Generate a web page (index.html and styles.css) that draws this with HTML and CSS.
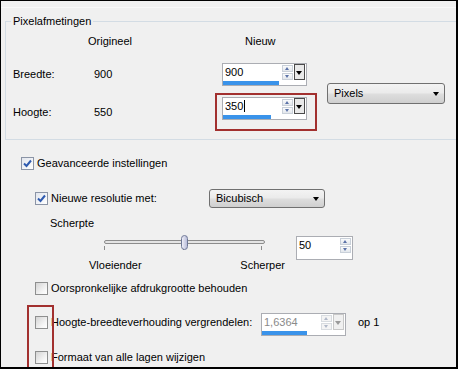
FILE: index.html
```html
<!DOCTYPE html>
<html lang="nl">
<head>
  <meta charset="UTF-8">
  <title>Afbeeldingsgrootte wijzigen</title>
  <link rel="stylesheet" href="styles.css">
</head>
<body>
  <div class="dialog">
    <fieldset class="group">
      <legend>Pixelafmetingen</legend>
      <div class="dims">
        <span class="head orig">Origineel</span>
        <span class="head new">Nieuw</span>

        <span class="lbl">Breedte:</span>
        <span class="val">900</span>
        <div class="cell">
          <div class="spin">
            <div class="top">
              <span class="entry">900</span>
              <span class="arrows"><i class="up"></i><i class="down"></i></span>
              <span class="drop"></span>
            </div>
            <div class="bar" style="width: 56px"></div>
          </div>
        </div>
        <div class="select unit">Pixels<span class="caret"></span></div>

        <span class="lbl">Hoogte:</span>
        <span class="val">550</span>
        <div class="cell mark">
          <div class="spin">
            <div class="top">
              <span class="entry">350<span class="cursor"></span></span>
              <span class="arrows"><i class="up"></i><i class="down"></i></span>
              <span class="drop"></span>
            </div>
            <div class="bar" style="width: 48px"></div>
          </div>
        </div>
      </div>
    </fieldset>

    <div class="options">
      <label class="check"><span class="box on"><svg width="11" height="11" viewBox="0 0 11 11"><path d="M2 5.5 L4.5 8 L9 2.5" fill="none" stroke="#2f5bb0" stroke-width="2"/></svg></span>Geavanceerde instellingen</label>

      <div class="sub">
        <div class="row resample">
          <label class="check fixed"><span class="box on"><svg width="11" height="11" viewBox="0 0 11 11"><path d="M2 5.5 L4.5 8 L9 2.5" fill="none" stroke="#2f5bb0" stroke-width="2"/></svg></span>Nieuwe resolutie met:</label>
          <div class="select method">Bicubisch<span class="caret"></span></div>
        </div>

        <div class="sharp-title">Scherpte</div>
        <div class="sharp">
          <div class="slider">
            <div class="track"><span class="thumb" style="left: 50%"></span></div>
            <div class="ticks"><i></i><i></i><i></i></div>
            <div class="ends"><span>Vloeiender</span><span>Scherper</span></div>
          </div>
          <div class="spin small">
            <div class="top">
              <span class="entry">50</span>
              <span class="arrows"><i class="up"></i><i class="down"></i></span>
            </div>
          </div>
        </div>

        <label class="check keep"><span class="box"></span>Oorspronkelijke afdrukgrootte behouden</label>

        <div class="row ratio">
          <label class="check lock"><span class="box"></span>Hoogte-breedteverhouding vergrendelen:</label>
          <div class="spin off">
            <div class="top">
              <span class="entry">1,6364</span>
              <span class="arrows"><i class="up"></i><i class="down"></i></span>
              <span class="drop"></span>
            </div>
            <div class="bar" style="width: 45px"></div>
          </div>
          <span class="per">op 1</span>
        </div>

        <label class="check last"><span class="box"></span>Formaat van alle lagen wijzigen</label>
      </div>
    </div>

    <div class="callout"></div>
  </div>
</body>
</html>
```

FILE: styles.css
```css
body {
  margin: 0;
  background-color: #F0F0F0;
  color: #000;
  font-family: "Liberation Sans", Arial, sans-serif;
  font-size: 11px;
  line-height: 13px;
}
.dialog {
  position: relative;
  box-sizing: border-box;
  width: 458px;
  height: 369px;
  padding-top: 6px;
  border: 1px solid #000;
  border-right-width: 2px;
  border-bottom-width: 2px;
  background-color: #F0F0F0;
  overflow: hidden;
}
.dialog::before {
  content: "";
  display: block;
  height: 1px;
  background-color: #F8F8F8;
}

/* pixel dimensions group */
.group {
  margin: 7px -20px 0 4px;
  padding: 6px 0 8px 7px;
  border: 1px solid #D3DCE4;
  border-right: none;
  min-width: 0;
}
.group legend {
  margin-left: -2px;
  padding: 0 2px;
}
.dims {
  display: grid;
  grid-template-columns: 75px 127px 102px auto;
  grid-template-rows: auto 38px 38px;
  align-items: center;
}
.head {
  height: 14px;
  line-height: 14px;
  margin-bottom: 7px;
}
.orig { grid-column: 2; }
.new { grid-column: 3; padding-left: 30px; }
.lbl { grid-column: 1; }
.val { padding-left: 6px; }
.cell {
  justify-self: start;
  padding-left: 7px;
}
.mark {
  align-self: stretch;
  box-sizing: border-box;
  padding: 2px 8px 9px 5px;
  border: 2px solid #A2302F;
}
.unit {
  grid-column: 4;
  grid-row: 2 / 4;
  margin-left: 10px;
  width: 118px;
}

/* spin box */
.spin {
  box-sizing: border-box;
  width: 85px;
  height: 23px;
  border: 1px solid #ABADB3;
  background-color: #fff;
}
.spin .top {
  display: flex;
  height: 17px;
}
.entry {
  flex: 1;
  padding: 2px 0 0 2px;
  line-height: 13px;
}
.cursor {
  display: inline-block;
  width: 1px;
  height: 12px;
  margin-left: 1px;
  vertical-align: -2px;
  background-color: #000;
}
.arrows {
  display: flex;
  flex-direction: column;
  gap: 1px;
  width: 11px;
  padding-top: 1px;
}
.arrows i {
  position: relative;
  box-sizing: border-box;
  height: 7px;
  border: 1px solid #C9D0D9;
  background: linear-gradient(#FAFBFC, #E3E7EC);
}
.arrows i::after {
  content: "";
  position: absolute;
  left: 2px;
  border-left: 2.5px solid transparent;
  border-right: 2.5px solid transparent;
}
.arrows .up::after {
  top: 1px;
  border-bottom: 3px solid #5C73A8;
}
.arrows .down::after {
  top: 1px;
  border-top: 3px solid #5C73A8;
}
.drop {
  position: relative;
  box-sizing: border-box;
  width: 11px;
  height: 16px;
  margin: 0 1px 0 1px;
  border: 1px solid #4A4A4A;
  background-color: #E9E9E9;
}
.drop::after {
  content: "";
  position: absolute;
  left: 1px;
  top: 6px;
  border-left: 3.5px solid transparent;
  border-right: 3.5px solid transparent;
  border-top: 4px solid #000;
}
.bar {
  height: 4px;
  background-color: #3A93EA;
}
.spin.off {
  margin-left: 4px;
  color: #8A8A8A;
}
.spin.off .arrows i {
  border-color: #D8DCE0;
  background: #F4F4F4;
}
.spin.off .up::after { border-bottom-color: #B0B8C8; }
.spin.off .down::after { border-top-color: #B0B8C8; }
.spin.off .drop {
  border-color: #C8C8C8;
  background-color: #F0F0F0;
}
.spin.off .drop::after { border-top-color: #9A9A9A; }
.spin.small {
  width: 57px;
  height: 24px;
  margin: 1px 0 0 11px;
}
.spin.small .arrows { margin-right: 1px; }

/* dropdowns */
.select {
  position: relative;
  box-sizing: border-box;
  height: 21px;
  padding-left: 6px;
  line-height: 19px;
  border: 1px solid #707070;
  border-radius: 3px;
  background: linear-gradient(#F3F3F3, #EBEBEB 45%, #DDDDDD 55%, #CFCFCF);
}
.caret {
  position: absolute;
  right: 5px;
  top: 8px;
  border-left: 3.5px solid transparent;
  border-right: 3.5px solid transparent;
  border-top: 4px solid #000;
}
.method {
  width: 116px;
  height: 19px;
  line-height: 17px;
}
.method .caret { top: 7px; }

/* lower options */
.options {
  padding: 17px 0 0 20px;
}
.check {
  display: flex;
  align-items: center;
  gap: 3px;
}
.box {
  box-sizing: border-box;
  width: 13px;
  height: 13px;
  border: 1px solid #8E8F8F;
  background: linear-gradient(135deg, #D4D4D4, #F6F6F6 70%, #FFFFFF);
}
.box.on {
  border-color: #8B94A6;
  background: linear-gradient(135deg, #E2E6EE, #FFFFFF);
}
.box svg { display: block; }
.sub {
  padding-left: 14px;
}
.row {
  display: flex;
}
.resample {
  align-items: center;
  margin-top: 19px;
}
.fixed { width: 174px; }
.sharp-title {
  margin: 9px 0 0 15px;
}
.sharp {
  display: flex;
  align-items: flex-start;
  margin: 5px 0 0 54px;
}
.slider {
  width: 196px;
}
.track {
  position: relative;
  box-sizing: border-box;
  width: 161px;
  height: 4px;
  margin: 5px 0 0 15px;
  border: 1px solid #8C8C8C;
  border-radius: 2px;
  background-color: #E4E4E4;
}
.thumb {
  position: absolute;
  top: -6px;
  box-sizing: border-box;
  width: 7px;
  height: 15px;
  margin-left: -4px;
  border: 1px solid #6E7897;
  border-radius: 4px;
  background: linear-gradient(to right, #EEEEF8, #B9BDD9);
}
.ticks {
  display: flex;
  justify-content: space-between;
  width: 158px;
  height: 4px;
  margin: 2px 0 0 15px;
}
.ticks i {
  width: 1px;
  background-color: #8C8C8C;
}
.ends {
  display: flex;
  justify-content: space-between;
  margin-top: 9px;
}
.keep {
  margin-top: 10px;
}
.ratio {
  align-items: flex-start;
  margin-top: 18px;
}
.lock {
  width: 222px;
  margin-top: 3px;
}
.per {
  margin: 3px 0 0 12px;
}
.last {
  margin-top: 15px;
}

.callout {
  position: absolute;
  left: 26px;
  top: 304px;
  width: 27px;
  height: 70px;
  box-sizing: border-box;
  border: 2px solid #A2302F;
}
```
